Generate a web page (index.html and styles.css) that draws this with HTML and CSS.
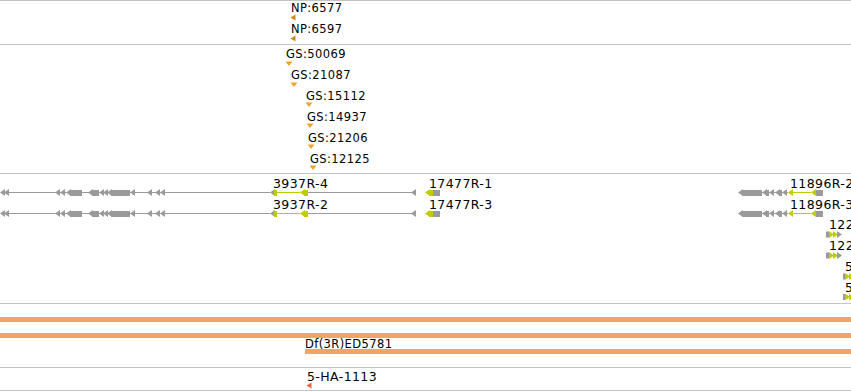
FILE: index.html
```html
<!DOCTYPE html>
<html lang="en">
<head>
  <meta charset="UTF-8">
  <title>Tracks</title>
  <link rel="stylesheet" href="styles.css">
</head>
<body>

  <div class="panel">

    <!-- NP insertions -->
    <div class="track">
      <svg width="851" height="43" viewBox="0 1 851 43">
        <text class="lbl" x="291" y="12">NP:6577</text>
        <polygon class="np" points="290.5,17.5 295.5,14.5 295.5,20.5"/>
        <text class="lbl" x="291" y="33">NP:6597</text>
        <polygon class="np" points="290.5,38.5 295.5,35.5 295.5,41.5"/>
      </svg>
    </div>

    <!-- GS insertions -->
    <div class="track">
      <svg width="851" height="128" viewBox="0 45 851 128">
        <text class="lbl" x="286" y="58">GS:50069</text>
        <polygon class="gs" points="285.5,61.5 292.5,61.5 289,66"/>
        <text class="lbl" x="291" y="79">GS:21087</text>
        <polygon class="gs" points="290.5,82.5 297.5,82.5 294,87"/>
        <text class="lbl" x="306" y="100">GS:15112</text>
        <polygon class="gs" points="305.5,102.5 312.5,102.5 309,107"/>
        <text class="lbl" x="307" y="121">GS:14937</text>
        <polygon class="gs" points="306.5,123.5 313.5,123.5 310,128"/>
        <text class="lbl" x="308" y="142">GS:21206</text>
        <polygon class="gs" points="307.5,144.5 314.5,144.5 311,149"/>
        <text class="lbl" x="310" y="163">GS:12125</text>
        <polygon class="gs" points="309.5,165.5 316.5,165.5 313,170"/>
      </svg>
    </div>

    <!-- gene models -->
    <div class="track">
      <svg width="851" height="129" viewBox="0 174 851 129">
        <defs>
          <polygon id="lt" points="0,0 5,-3.5 5,3.5"/>
          <polygon id="rt" points="5,0 0,-3.5 0,3.5"/>
          <g id="tx">
            <rect class="grey" x="9" y="192" width="261" height="1"/>
            <use class="grey" href="#lt" x="0" y="192.5"/>
            <use class="grey" href="#lt" x="4" y="192.5"/>
            <use class="grey" href="#lt" x="55" y="192.5"/>
            <use class="grey" href="#lt" x="60" y="192.5"/>
            <use class="grey" href="#lt" x="66" y="192.5"/>
            <rect class="grey" x="70" y="190" width="12" height="6"/>
            <use class="grey" href="#lt" x="88" y="192.5"/>
            <rect class="grey" x="92" y="190" width="7" height="6"/>
            <use class="grey" href="#lt" x="99" y="192.5"/>
            <use class="grey" href="#lt" x="103" y="192.5"/>
            <use class="grey" href="#lt" x="107" y="192.5"/>
            <rect class="grey" x="111" y="190" width="19" height="6"/>
            <use class="grey" href="#lt" x="130" y="192.5"/>
            <use class="grey" href="#lt" x="147" y="192.5"/>
            <use class="grey" href="#lt" x="155" y="192.5"/>
            <use class="grey" href="#lt" x="160" y="192.5"/>
            <use class="grey" href="#lt" x="270" y="192.5"/>
            <rect class="green" x="274" y="190" width="3" height="6"/>
            <rect class="green" x="277" y="192" width="23" height="1"/>
            <use class="green" href="#lt" x="300" y="192.5"/>
            <rect class="green" x="304" y="190" width="4" height="6"/>
            <rect class="grey" x="308" y="192" width="104" height="1"/>
            <use class="grey" href="#lt" x="411" y="192.5"/>
            <use class="green" href="#lt" x="425" y="192.5"/>
            <rect class="green" x="429" y="190" width="4" height="6"/>
            <rect class="grey" x="433" y="190" width="7" height="6"/>
            <use class="grey" href="#lt" x="738" y="192.5"/>
            <rect class="grey" x="742" y="190" width="20" height="6"/>
            <rect class="grey" x="762" y="192" width="26" height="1"/>
            <use class="grey" href="#lt" x="762" y="192.5"/>
            <rect class="grey" x="766" y="190" width="3" height="6"/>
            <use class="grey" href="#lt" x="769" y="192.5"/>
            <use class="grey" href="#lt" x="775" y="192.5"/>
            <rect class="grey" x="779" y="190" width="3" height="6"/>
            <use class="grey" href="#lt" x="782" y="192.5"/>
            <use class="green" href="#lt" x="788" y="192.5"/>
            <rect class="green" x="793" y="192" width="18" height="1"/>
            <use class="green" href="#lt" x="811" y="192.5"/>
            <rect class="grey" x="816" y="190" width="7" height="6"/>
          </g>
          <g id="fwd">
            <rect class="grey" x="826" y="231.5" width="3" height="6"/>
            <use class="green" href="#rt" x="829" y="234.5"/>
            <use class="green" href="#rt" x="833" y="234.5"/>
            <use class="grey" href="#rt" x="837" y="234.5"/>
          </g>
          <g id="fwd2">
            <rect class="grey" x="843" y="273.5" width="2" height="6"/>
            <use class="green" href="#rt" x="845" y="276.5"/>
            <use class="green" href="#rt" x="849" y="276.5"/>
          </g>
        </defs>

        <use href="#tx"/>
        <use href="#tx" y="21"/>
        <text class="lbl lg" x="273" y="188">3937R-4</text>
        <text class="lbl lg" x="429" y="188">17477R-1</text>
        <text class="lbl lg" x="790" y="188">11896R-2</text>
        <text class="lbl lg" x="273" y="209">3937R-2</text>
        <text class="lbl lg" x="429" y="209">17477R-3</text>
        <text class="lbl lg" x="790" y="209">11896R-3</text>

        <use href="#fwd"/>
        <use href="#fwd" y="21"/>
        <text class="lbl lg" x="829" y="229">122</text>
        <text class="lbl lg" x="829" y="250">122</text>

        <use href="#fwd2"/>
        <use href="#fwd2" y="20.5"/>
        <text class="lbl lg" x="845" y="271">5</text>
        <text class="lbl lg" x="845" y="292">5</text>
      </svg>
    </div>

    <!-- deficiencies -->
    <div class="track">
      <svg width="851" height="63" viewBox="0 304 851 63">
        <rect class="def" x="0" y="317" width="851" height="5"/>
        <rect class="def" x="0" y="333" width="851" height="5"/>
        <text class="lbl" x="305" y="348">Df(3R)ED5781</text>
        <rect class="def" x="305" y="349" width="546" height="5"/>
      </svg>
    </div>

    <!-- 5-HA -->
    <div class="track">
      <svg width="851" height="22" viewBox="0 368 851 22">
        <text class="lbl lg" x="307" y="381">5-HA-1113</text>
        <polygon class="ha" points="306.5,385.5 311.5,382.5 311.5,388.5"/>
      </svg>
    </div>

  </div>

</body>
</html>
```

FILE: styles.css
```css
/* Estilos generales */
body {
  margin: 0;
  padding: 0;
  background: #fff;
  overflow: hidden;
}

.panel {
  width: 851px;
  border-top: 1px solid #c4c4c4;
}

.track {
  border-bottom: 1px solid #c4c4c4;
}

.track svg {
  display: block;
}

/* Etiquetas */
.lbl {
  font-family: 'DejaVu Sans', sans-serif;
  font-size: 11.5px;
  letter-spacing: 0.4px;
  fill: #000;
}

.lbl.lg {
  font-size: 12.5px;
}

/* Glifos */
.np { fill: #c98a16; }
.gs { fill: #f2a32a; }
.ha { fill: #f0603c; }
.grey { fill: #9a9a9a; }
.green { fill: #bfcd00; }
.def { fill: #f4a460; }
```
